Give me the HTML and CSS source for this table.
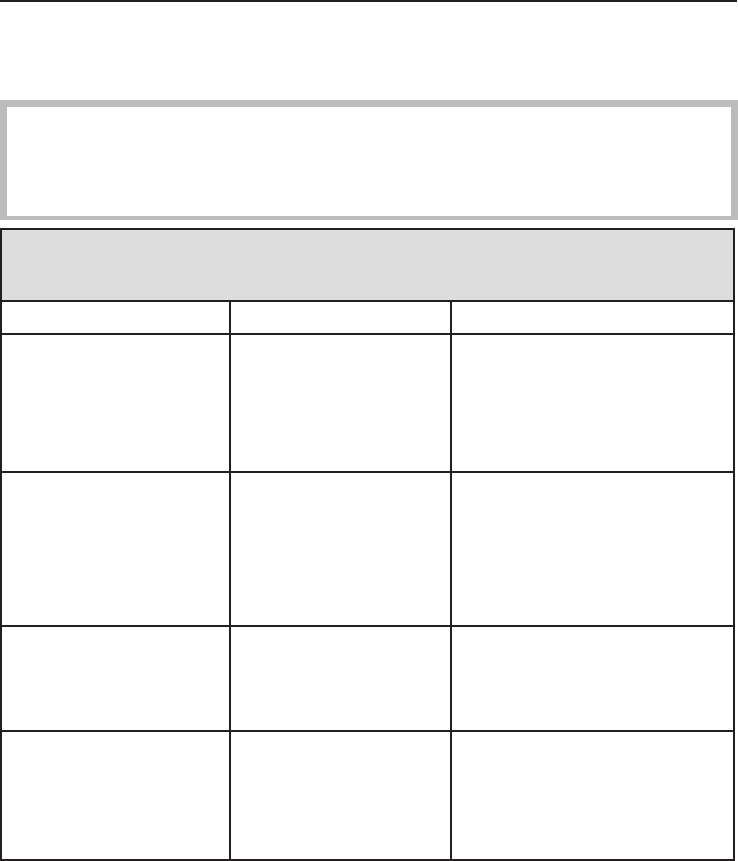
FILE: index.html
```html
<!DOCTYPE html>
<html>
<head>
<meta charset="utf-8">
<link rel="stylesheet" href="styles.css">
</head>
<body>
<div class="page">
  <div class="topline"></div>
  <div class="notice"></div>
  <div class="table">
    <div class="thead"></div>
    <div class="row r1"><div class="cell"></div><div class="cell"></div><div class="cell"></div></div>
    <div class="row r2"><div class="cell"></div><div class="cell"></div><div class="cell"></div></div>
    <div class="row r3"><div class="cell"></div><div class="cell"></div><div class="cell"></div></div>
    <div class="row r4"><div class="cell"></div><div class="cell"></div><div class="cell"></div></div>
    <div class="row r5"><div class="cell"></div><div class="cell"></div><div class="cell"></div></div>
  </div>
</div>
</body>
</html>
```
FILE: styles.css
```css
html, body {
  margin: 0;
  padding: 0;
  background: #ffffff;
  font-family: "Liberation Sans", Arial, sans-serif;
}
.page {
  width: 738px;
  height: 861px;
  overflow: hidden;
}
.topline {
  width: 737px;
  height: 2px;
  background: #231f20;
}
.notice {
  box-sizing: border-box;
  margin-top: 98px;
  width: 738px;
  height: 120px;
  border: 7px solid #bcbcbc;
  border-bottom-width: 4px;
}
.table {
  box-sizing: border-box;
  margin-top: 8px;
  width: 735px;
  border: 2px solid #231f20;
  border-bottom: none;
}
.thead {
  height: 70px;
  background: #dddddd;
}
.row {
  display: grid;
  grid-template-columns: 227px 221px 283px;
  border-top: 2px solid #231f20;
}
.cell + .cell {
  border-left: 2px solid #231f20;
}
.r1 { height: 31px; }
.r2 { height: 136px; }
.r3 { height: 152px; }
.r4 { height: 103px; }
.r5 { height: 127px; border-bottom: 2px solid #231f20; }
```
